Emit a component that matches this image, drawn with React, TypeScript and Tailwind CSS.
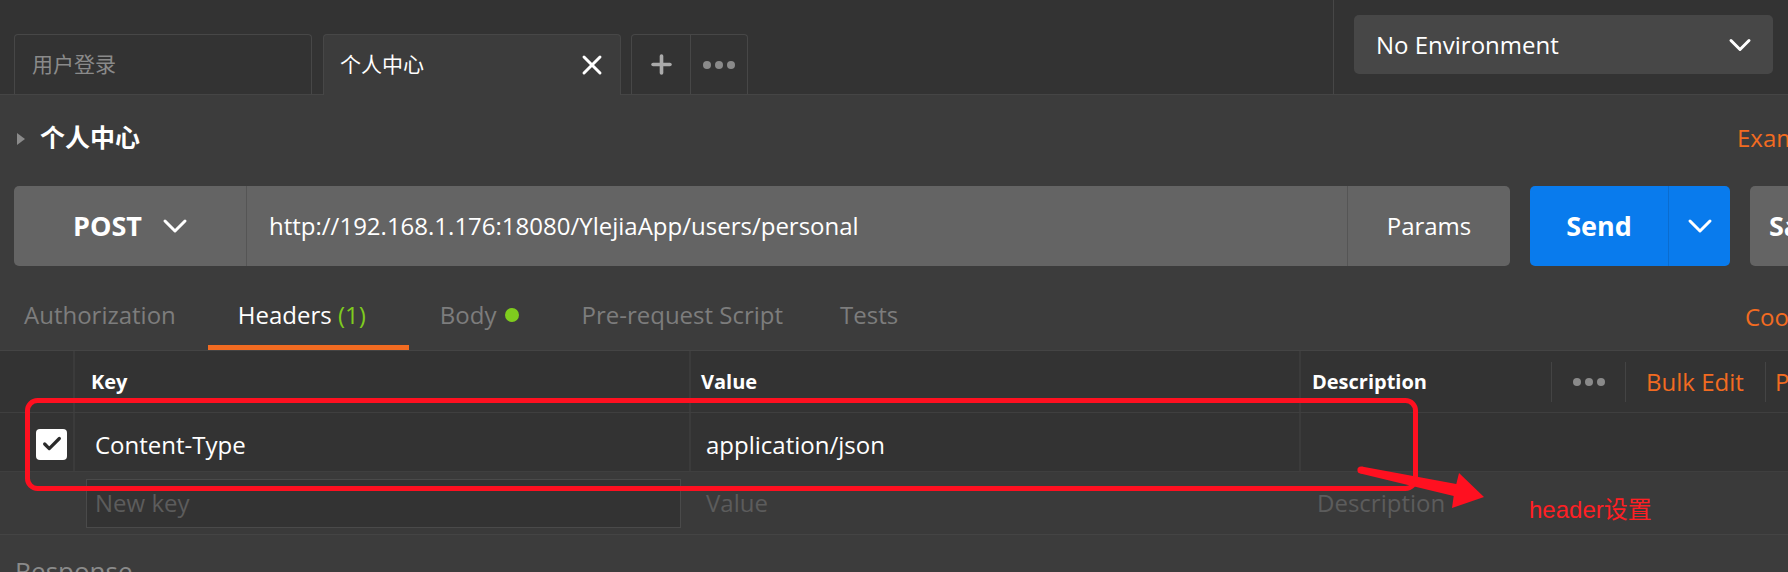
import { Check, ChevronDown, Plus, X } from "lucide-react";

function Dots({ color }: { color: string }) {
  return (
    <div className="flex items-center gap-[4px]">
      <span className={`h-[8px] w-[8px] rounded-full ${color}`} />
      <span className={`h-[8px] w-[8px] rounded-full ${color}`} />
      <span className={`h-[8px] w-[8px] rounded-full ${color}`} />
    </div>
  );
}

function TopBar() {
  return (
    <div className="flex h-[95px] border-b border-[#454545] bg-[#333333]">
      <div className="flex w-[1333px] items-end gap-[10px] pl-[14px]">
        <div className="mr-[1px] flex h-[60px] w-[298px] items-center rounded-t-[4px] border border-b-0 border-[#474747] pl-[17px] text-[21px] text-[#8a8a8a]">
          用户登录
        </div>
        <div className="-mb-px flex h-[61px] w-[298px] items-center justify-between rounded-t-[4px] border border-b-0 border-[#474747] bg-[#3c3c3c] pl-[16px] pr-[12px] text-[21px] text-white">
          <span>个人中心</span>
          <X size={32} strokeWidth={2.2} />
        </div>
        <div className="flex h-[60px] w-[117px] rounded-t-[4px] border border-b-0 border-[#474747]">
          <div className="flex w-[59px] items-center justify-center border-r border-[#474747] text-[#aaaaaa]">
            <Plus size={29} strokeWidth={3} />
          </div>
          <div className="flex flex-1 items-center justify-center">
            <Dots color="bg-[#8a8a8a]" />
          </div>
        </div>
      </div>
      <div className="flex-1 border-l border-[#474747] pl-[20px] pt-[15px]">
        <div className="flex h-[59px] w-[419px] items-center justify-between rounded-[5px] bg-[#474747] pl-[22px] pr-[15px] text-[24px] text-white">
          <span>No Environment</span>
          <ChevronDown size={36} strokeWidth={2} />
        </div>
      </div>
    </div>
  );
}

function TitleRow() {
  return (
    <div className="flex h-[91px] items-center pb-[6px]">
      <div className="flex w-[1737px] shrink-0 items-center pl-[17px]">
        <svg width="9" height="12" viewBox="0 0 9 12" className="mt-[2px]">
          <path d="M0 0 L8 6 L0 12 Z" fill="#8a8a8a" />
        </svg>
        <span className="ml-[14px] text-[25px] font-bold text-white">个人中心</span>
      </div>
      <span className="shrink-0 whitespace-nowrap text-[24px] text-[#f26b21]">Examples (0)</span>
    </div>
  );
}

function UrlRow() {
  return (
    <div className="flex h-[80px] pl-[14px]">
      <div className="flex w-[1496px] shrink-0 rounded-[5px] bg-[#646464] text-white">
        <div className="flex w-[233px] items-center border-r border-[#555555] pl-[59px]">
          <span className="text-[27px] font-bold">POST</span>
          <ChevronDown size={40} strokeWidth={1.8} className="ml-[13px]" />
        </div>
        <div className="flex flex-1 items-center pl-[22px] text-[24px]">
          http://192.168.1.176:18080/YlejiaApp/users/personal
        </div>
        <div className="flex w-[163px] items-center justify-center border-l border-[#555555] text-[24px]">
          Params
        </div>
      </div>
      <div className="ml-[20px] flex w-[200px] shrink-0 rounded-[5px] bg-[#097bed] text-white">
        <div className="flex w-[139px] items-center justify-center border-r border-[#0a6ccf] text-[27px] font-bold">
          Send
        </div>
        <div className="flex flex-1 items-center justify-center">
          <ChevronDown size={40} strokeWidth={1.8} />
        </div>
      </div>
      <div className="ml-[20px] flex w-[120px] shrink-0 items-center rounded-[5px] bg-[#646464] pl-[19px] text-[27px] font-bold text-white">
        Save
      </div>
    </div>
  );
}

function RequestTabs() {
  return (
    <div className="flex h-[85px] items-end border-b border-[#444444] text-[24px] leading-[32px]">
      <div className="flex w-[1745px] shrink-0 items-end">
        <span className="ml-[24px] pb-[19px] text-[#7d7d7d]">Authorization</span>
        <div className="ml-[32px] w-[201px] border-b-[5px] border-[#f26b21] pb-[14px] pl-[30px]">
          <span className="text-white">Headers </span>
          <span className="text-[#7fcc1e]">(1)</span>
        </div>
        <div className="ml-[31px] flex items-center pb-[19px]">
          <span className="text-[#7d7d7d]">Body</span>
          <span className="ml-[9px] h-[14px] w-[14px] rounded-full bg-[#7fcc1e]" />
        </div>
        <span className="ml-[62px] pb-[19px] text-[#7d7d7d]">Pre-request Script</span>
        <span className="ml-[57px] pb-[19px] text-[#7d7d7d]">Tests</span>
      </div>
      <span className="shrink-0 whitespace-nowrap pb-[17px] text-[#f26b21]">Cookies</span>
    </div>
  );
}

function HeadersTable() {
  return (
    <div>
      <div className="flex h-[62px] border-b border-[#3f3f3f] bg-[#333333] text-[20px] font-bold text-white">
        <div className="w-[73px] shrink-0" />
        <div className="flex w-[618px] shrink-0 items-center border-x-2 border-[#3b3b3b] pl-[16px]">Key</div>
        <div className="flex w-[610px] shrink-0 items-center border-r-2 border-[#3b3b3b] pl-[10px]">Value</div>
        <div className="flex w-[250px] shrink-0 items-center pl-[11px]">Description</div>
        <div className="flex w-[237px] shrink-0 items-center font-normal">
          <div className="flex h-[40px] w-[74px] shrink-0 items-center justify-center border-l border-[#444444]">
            <Dots color="bg-[#8a8a8a]" />
          </div>
          <div className="flex h-[40px] w-[140px] shrink-0 items-center border-l border-[#444444] pl-[20px] text-[24px] text-[#f26b21]">
            Bulk Edit
          </div>
          <div className="flex h-[40px] w-[60px] shrink-0 items-center whitespace-nowrap border-l border-[#444444] pl-[9px] text-[24px] text-[#f26b21]">
            Presets
          </div>
        </div>
      </div>
      <div className="flex h-[59px] border-b border-[#3f3f3f] bg-[#333333] text-[24px] text-white">
        <div className="flex w-[73px] shrink-0 items-center pl-[36px] pt-[4px]">
          <div className="flex h-[31px] w-[31px] items-center justify-center rounded-[4px] bg-white text-[#2b2b2b]">
            <Check size={22} strokeWidth={3.5} />
          </div>
        </div>
        <div className="flex w-[618px] shrink-0 items-center border-x-2 border-[#3b3b3b] pl-[20px] pt-[5px]">Content-Type</div>
        <div className="flex w-[610px] shrink-0 items-center border-r-2 border-[#3b3b3b] pl-[15px] pt-[5px]">application/json</div>
        <div className="flex-1" />
      </div>
      <div className="flex h-[63px] border-b border-[#444444] bg-[#3a3a3a] text-[24px] text-[#5c5c5c]">
        <div className="w-[86px] shrink-0" />
        <div className="flex h-[49px] w-[595px] shrink-0 items-center self-center border border-[#4a4a4a] bg-[#333333] pl-[8px]">
          New key
        </div>
        <div className="flex w-[620px] shrink-0 items-center pl-[25px]">Value</div>
        <div className="flex flex-1 items-center pl-[16px]">Description</div>
      </div>
    </div>
  );
}

function Annotation() {
  return (
    <>
      <svg className="pointer-events-none absolute left-0 top-0" width="1788" height="572" viewBox="0 0 1788 572">
        <rect x="27.5" y="400.5" width="1388" height="88" rx="10" fill="none" stroke="#ff1020" strokeWidth="5" />
        <circle cx="1361" cy="470" r="3.6" fill="#ff1020" />
        <polygon
          points="1361.7,466.6 1456.3,484.1 1459,473 1484,497 1452,508 1453.7,495.9 1360.3,473.4"
          fill="#ff1020"
        />
      </svg>
      <div className="pointer-events-none absolute left-[1529px] top-[497px] font-['Liberation_Sans','Noto_Sans_CJK_SC',sans-serif] text-[24px] leading-[26px] text-[#ff1f24]">
        header设置
      </div>
    </>
  );
}

export default function App() {
  return (
    <div className="relative h-[572px] w-[1788px] overflow-hidden bg-[#3c3c3c] font-['Open_Sans','Noto_Sans_CJK_SC',sans-serif]">
      <TopBar />
      <TitleRow />
      <UrlRow />
      <RequestTabs />
      <HeadersTable />
      <div className="pl-[15px] pt-[18px] text-[26px] leading-[36px] text-[#8a8a8a]">Response</div>
      <Annotation />
    </div>
  );
}
